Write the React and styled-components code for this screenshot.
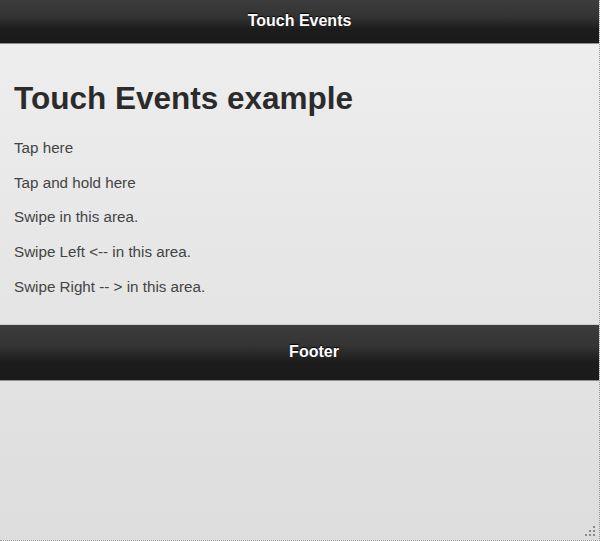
import styled, { createGlobalStyle } from "styled-components";

const GlobalStyle = createGlobalStyle`
  html, body {
    margin: 0;
    padding: 0;
  }
  body {
    font-family: "Liberation Sans", Arial, Helvetica, sans-serif;
  }
`;

const Page = styled.div`
  position: relative;
  box-sizing: border-box;
  width: 600px;
  height: 541px;
  display: flex;
  flex-direction: column;
  background: linear-gradient(#efefef, #dddddd);
  border-right: 1px dotted #9a9a9a;
  border-bottom: 1px dotted #9a9a9a;
  overflow: hidden;
`;

const Bar = styled.div`
  display: flex;
  align-items: center;
  justify-content: center;
  height: ${(p) => p.height}px;
  background: linear-gradient(#3c3c3c, #343434 38%, #1c1c1c 68%, #1a1a1a);
  border-top: ${(p) => (p.footer ? "1px solid #cfcfcf" : "none")};
  border-bottom: 1px solid #8f8f8f;
  color: #fff;
  font-size: 16px;
  font-weight: bold;
  text-shadow: 0 -1px 1px #000;
  flex-shrink: 0;
`;

const BarTitle = styled.h1`
  margin: 0;
  font-size: 16px;
  font-weight: bold;
  padding-left: ${(p) => p.shift || 0}px;
  padding-bottom: ${(p) => p.lift || 0}px;
`;

const Content = styled.div`
  padding: 15px 14px 12px;
  color: #333;
`;

const Heading = styled.h1`
  margin: 19px 0 19px;
  font-size: 31.5px;
  font-weight: bold;
  line-height: 1.3;
  color: #2b2b2b;
`;

const Line = styled.p`
  margin: 15px 0;
  font-size: 15.2px;
  line-height: 1.3;
  color: #444;
`;

const Grip = styled.svg`
  position: absolute;
  right: 2px;
  bottom: 2px;
`;

export default function App() {
  return (
    <>
      <GlobalStyle />
      <Page>
        <Bar height={43}>
          <BarTitle lift={2}>Touch Events</BarTitle>
        </Bar>
        <Content>
          <Heading>Touch Events example</Heading>
          <Line>Tap here</Line>
          <Line>Tap and hold here</Line>
          <Line>Swipe in this area.</Line>
          <Line>Swipe Left &lt;-- in this area.</Line>
          <Line>Swipe Right -- &gt; in this area.</Line>
        </Content>
        <Bar footer height={55}>
          <BarTitle shift={29}>Footer</BarTitle>
        </Bar>
        <Grip width="12" height="12" viewBox="0 0 12 12">
          <g fill="#8a8a8a">
            <rect x="8" y="0" width="2" height="2" />
            <rect x="4" y="4" width="2" height="2" />
            <rect x="8" y="4" width="2" height="2" />
            <rect x="0" y="8" width="2" height="2" />
            <rect x="4" y="8" width="2" height="2" />
            <rect x="8" y="8" width="2" height="2" />
          </g>
        </Grip>
      </Page>
    </>
  );
}
